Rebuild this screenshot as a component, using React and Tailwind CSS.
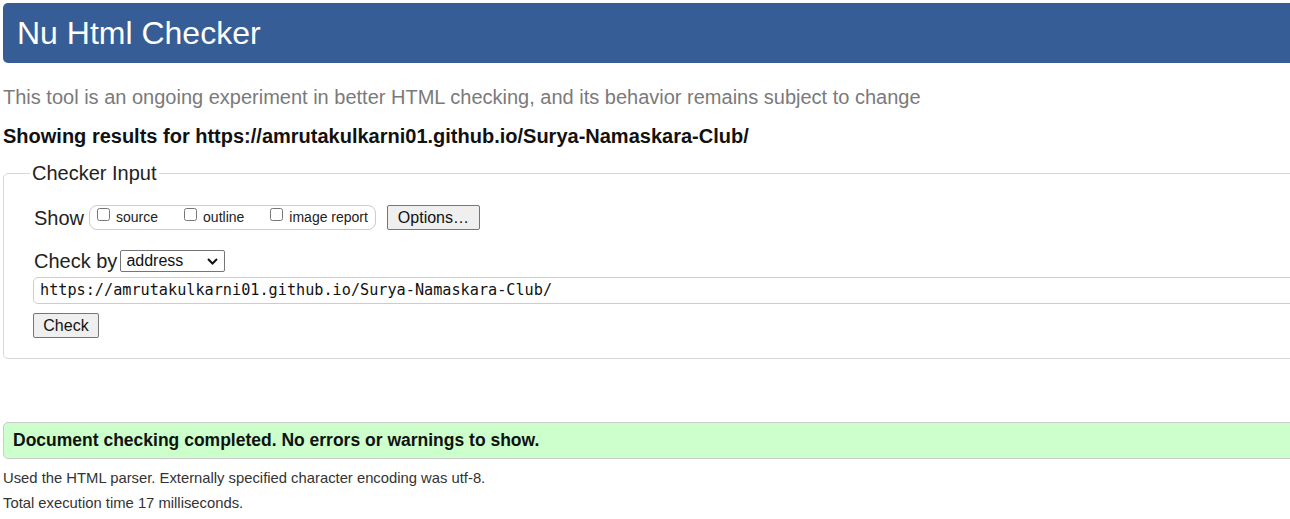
import React from 'react';

export default function App() {
  return (
    <div className="w-full h-[519px] overflow-hidden bg-white font-['Liberation_Sans',Arial,sans-serif] text-black">
      <div className="w-[1320px] pl-[3px] pt-[3px]">
        {/* Header */}
        <h1 className="h-[60px] bg-[#365d95] rounded-[5px] pl-[14px] flex items-center text-[32px] text-white leading-none">
          Nu Html Checker
        </h1>

        <p className="mt-[22px] text-[20px] leading-[24px] text-[#7a7a7a]">
          This tool is an ongoing experiment in better HTML checking, and its behavior remains subject to change
        </p>

        <p className="mt-[15px] text-[20px] leading-[24px] font-bold text-[#111]">
          Showing results for https://amrutakulkarni01.github.io/Surya-Namaskara-Club/
        </p>

        {/* Checker Input */}
        <fieldset className="mt-[13px] border border-[#d8d8d8] rounded-[5px] pl-[30px] pr-4 pt-[12px] pb-[20px]">
          <legend className="text-[20px] leading-[24px] px-[2px] -ml-[4px] text-[#222]">Checker Input</legend>

          <div className="flex items-center mt-[8px]">
            <span className="text-[20px] leading-[24px] text-[#222]">Show</span>
            <div className="ml-[5px] flex items-center border border-[#ccc] rounded-[8px] h-[25px] pl-[7px] pr-[7px] text-[14px]">
              <label className="flex items-center">
                <input type="checkbox" className="w-[13px] h-[13px] -mt-[6px]" />
                <span className="ml-[6px] text-[#222]">source</span>
              </label>
              <label className="flex items-center ml-[26px]">
                <input type="checkbox" className="w-[13px] h-[13px] -mt-[6px]" />
                <span className="ml-[6px] text-[#222]">outline</span>
              </label>
              <label className="flex items-center ml-[26px]">
                <input type="checkbox" className="w-[13px] h-[13px] -mt-[6px]" />
                <span className="ml-[6px] text-[#222]">image report</span>
              </label>
            </div>
            <button className="ml-[11px] h-[25px] w-[93px] text-[16px] leading-none bg-[#efefef] border border-[#767676] rounded-[2px] text-[#111]">
              Options…
            </button>
          </div>

          <div className="flex items-center mt-[19px]">
            <span className="text-[20px] leading-[24px] text-[#222]">Check by</span>
            <div className="ml-[3px] h-[22px] w-[105px] border border-[#767676] rounded-[2px] flex items-center justify-between pl-[5px] pr-[6px] text-[16px] text-[#111]">
              <span>address</span>
              <svg width="11" height="7" viewBox="0 0 11 7">
                <path d="M1 1l4.5 4.5L10 1" fill="none" stroke="#111" strokeWidth="2" />
              </svg>
            </div>
          </div>

          <div className="mt-[4px] -mr-4 -ml-[1px] h-[27px] border border-[#ccc] rounded-[5px] flex items-center pl-[6px] font-['DejaVu_Sans_Mono',monospace] text-[15.2px] text-[#111]">
            https://amrutakulkarni01.github.io/Surya-Namaskara-Club/
          </div>

          <button className="mt-[9px] -ml-[1px] h-[25px] w-[66px] text-[16px] leading-none bg-[#efefef] border border-[#767676] rounded-[2px] text-[#111]">
            Check
          </button>
        </fieldset>

        {/* Result */}
        <div className="mt-[63px] h-[37px] bg-[#ccffcc] border border-[#cccccc] rounded-[5px] flex items-center pl-[9px] text-[17.5px] font-bold text-[#111]">
          Document checking completed. No errors or warnings to show.
        </div>

        <p className="mt-[9px] text-[14.8px] leading-[20px] text-[#333]">
          Used the HTML parser. Externally specified character encoding was utf-8.
        </p>
        <p className="mt-[5px] text-[14.8px] leading-[20px] text-[#333]">
          Total execution time 17 milliseconds.
        </p>
      </div>
    </div>
  );
}
